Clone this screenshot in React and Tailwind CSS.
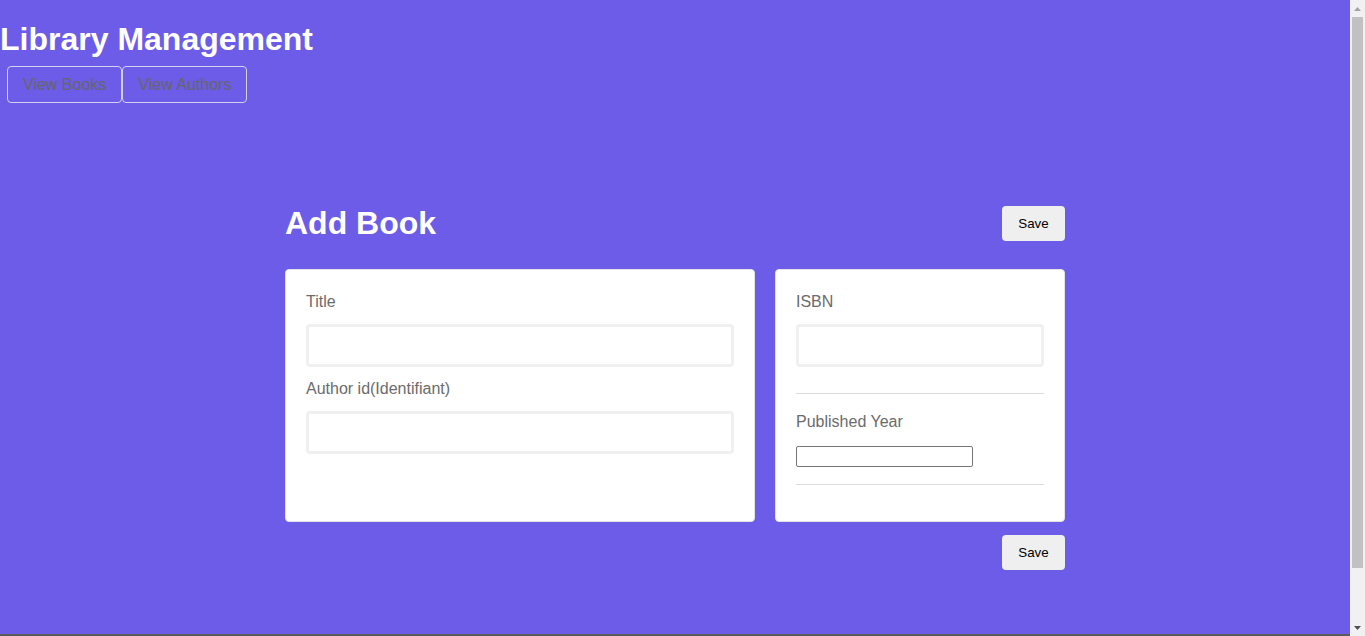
import React from 'react';

const Field = ({ label, className = '' }) => (
  <div className={className}>
    <label className="block text-[16px] leading-[18px] text-[#6b6b6b] mb-[13px]">{label}</label>
    <input
      type="text"
      className="block w-full h-[43px] border-[3px] border-[#f0f0f0] rounded-[4px] px-2 bg-white outline-none"
    />
  </div>
);

// the page scrolls in the screenshot, so the right edge carries a classic scrollbar
const ScrollBar = () => (
  <div className="w-[15px] h-[636px] shrink-0 bg-[#f1f1f1] flex flex-col items-center">
    <div className="h-[17px] flex items-center justify-center">
      <svg width="7" height="4" viewBox="0 0 7 4"><path d="M3.5 0L7 4H0z" fill="#a3a3a3" /></svg>
    </div>
    <div className="w-[11px] h-[551px] bg-[#c1c1c1]" />
    <div className="flex-1" />
    <div className="h-[17px] flex items-center justify-center">
      <svg width="7" height="4" viewBox="0 0 7 4"><path d="M0 0H7L3.5 4z" fill="#505050" /></svg>
    </div>
  </div>
);

const App = () => {
  return (
    <div className="flex font-['Liberation_Sans',Arial,sans-serif]">
      <div className="flex-1 min-w-0">
        <div className="bg-[#6c5ce7] min-h-[634px] pt-[21px]">
          <h1 className="text-[32px] leading-[37px] font-bold text-white">Library Management</h1>
          <div className="flex ml-[7px] mt-[8px]">
            <button className="h-[37px] px-[15px] border border-[#d4d0ee] rounded-[4px] text-[16px] text-[#666]">
              View Books
            </button>
            <button className="h-[37px] px-[15px] border border-[#d4d0ee] rounded-[4px] text-[16px] text-[#666]">
              View Authors
            </button>
          </div>

          <div className="max-w-[780px] mx-auto mt-[102px]">
            <div className="flex items-center justify-between">
              <h2 className="text-[32px] leading-[37px] font-bold text-white">Add Book</h2>
              <button className="w-[63px] h-[35px] bg-[#efefef] rounded-[4px] text-[13.33px] text-black">Save</button>
            </div>

            <div className="flex gap-[20px] mt-[27px]">
              <div className="w-[470px] bg-white border border-[#e4e4e4] rounded-[4px] p-[20px] pt-[23px]">
                <Field label="Title" />
                <Field label="Author id(Identifiant)" className="mt-[13px]" />
              </div>
              <div className="w-[290px] bg-white border border-[#e4e4e4] rounded-[4px] p-[20px] pt-[23px] pb-[36px]">
                <Field label="ISBN" />
                <div className="h-px bg-[#dddddd] mt-[26px]" />
                <label className="block text-[16px] leading-[18px] text-[#6b6b6b] mt-[19px] mb-[15px]">Published Year</label>
                <input
                  type="text"
                  className="block w-[177px] h-[21px] border border-[#767676] rounded-[2px] bg-white outline-none"
                />
                <div className="h-px bg-[#dddddd] mt-[17px]" />
              </div>
            </div>

            <div className="flex justify-end mt-[13px]">
              <button className="w-[63px] h-[35px] bg-[#efefef] rounded-[4px] text-[13.33px] text-black">Save</button>
            </div>
          </div>
        </div>
        <div className="h-[61px] bg-[#5b5b5b]" />
      </div>
      <ScrollBar />
    </div>
  );
};

export default App;
